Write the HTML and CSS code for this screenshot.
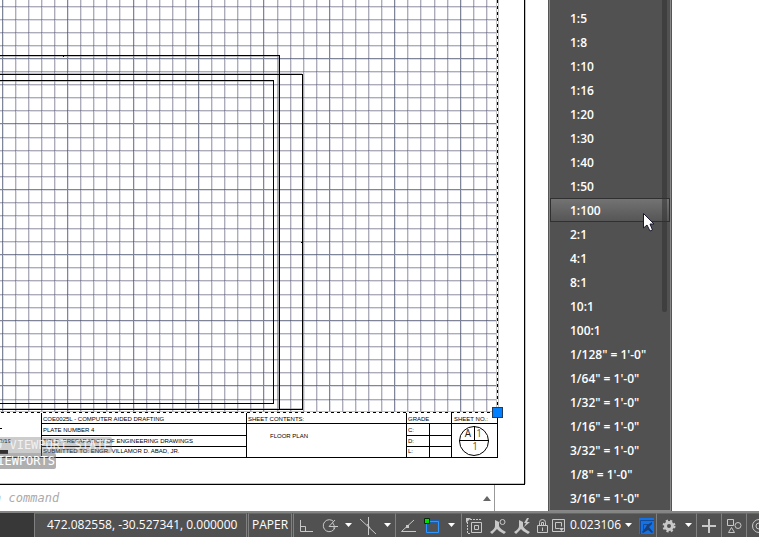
FILE: index.html
```html
<!DOCTYPE html>
<html lang="en">
<head>
<meta charset="utf-8">
<title>Floor plan layout</title>
<link rel="stylesheet" href="styles.css">
</head>
<body>
<main class="workspace">
  <svg class="sheet" width="548" height="486" viewBox="0 0 548 486" role="img" aria-label="Floor plan sheet">
    <g class="grid">
      <path class="soft" d="M3.5 0V412M16.5 0V412M29.5 0V412M42.5 0V412M55.5 0V412M68.5 0V412M81.5 0V412M94.5 0V412M107.5 0V412M120.5 0V412M134.5 0V412M147.5 0V412M160.5 0V412M173.5 0V412M186.5 0V412M199.5 0V412M212.5 0V412M225.5 0V412M238.5 0V412M251.5 0V412M264.5 0V412M278.5 0V412M291.5 0V412M304.5 0V412M317.5 0V412M330.5 0V412M343.5 0V412M356.5 0V412M369.5 0V412M382.5 0V412M395.5 0V412M408.5 0V412M421.5 0V412M435.5 0V412M448.5 0V412M461.5 0V412M474.5 0V412M487.5 0V412"/>
      <path class="soft" d="M0 7.5H496M0 20.5H496M0 33.5H496M0 46.5H496M0 59.5H496M0 72.5H496M0 85.5H496M0 98.5H496M0 111.5H496M0 124.5H496M0 138.5H496M0 151.5H496M0 164.5H496M0 177.5H496M0 190.5H496M0 203.5H496M0 216.5H496M0 229.5H496M0 242.5H496M0 255.5H496M0 268.5H496M0 281.5H496M0 295.5H496M0 308.5H496M0 321.5H496M0 334.5H496M0 347.5H496M0 360.5H496M0 373.5H496M0 386.5H496M0 400.5H496"/>
      <path class="minor" d="M15.5 0V412M28.5 0V412M41.5 0V412M54.5 0V412M80.5 0V412M93.5 0V412M106.5 0V412M119.5 0V412M146.5 0V412M159.5 0V412M172.5 0V412M185.5 0V412M211.5 0V412M224.5 0V412M237.5 0V412M250.5 0V412M277.5 0V412M290.5 0V412M303.5 0V412M316.5 0V412M342.5 0V412M355.5 0V412M368.5 0V412M381.5 0V412M407.5 0V412M420.5 0V412M434.5 0V412M447.5 0V412M473.5 0V412M486.5 0V412"/>
      <path class="minor" d="M0 6.5H496M0 19.5H496M0 32.5H496M0 45.5H496M0 71.5H496M0 84.5H496M0 97.5H496M0 110.5H496M0 137.5H496M0 150.5H496M0 163.5H496M0 176.5H496M0 202.5H496M0 215.5H496M0 228.5H496M0 241.5H496M0 267.5H496M0 280.5H496M0 294.5H496M0 307.5H496M0 333.5H496M0 346.5H496M0 359.5H496M0 372.5H496M0 399.5H496"/>
      <path class="major" d="M2.5 0V412M67.5 0V412M133.5 0V412M198.5 0V412M263.5 0V412M329.5 0V412M394.5 0V412M460.5 0V412M0 58.5H496M0 123.5H496M0 189.5H496M0 254.5H496M0 320.5H496M0 385.5H496"/>
    </g>
    <path class="wall-shade" d="M0 56.5H278M278.5 56V409M0 73.5H302M0 81.5H273M0 408.5H302"/>
    <path class="ink" d="M0 55.5H279.5V409M0 74.5H302.5V409.5H0M0 80.5H273.5V403.5H0M63 56.5H64M301 242.5H302"/>
    <path class="edge-shade" d="M496.5 0V411M498.5 0V411M0 411.5H497M525.5 0V484M0 483.5H524"/>
    <path class="ink" d="M524.5 0V484.5H0"/>
    <path class="dash-base" d="M497.5 0V412.5H0"/>
    <path class="dash" d="M497.5 0V412.5H0"/>
    <!-- title block -->
    <path class="ink" d="M41.5 413V457M246.5 413V457M406.5 413V457M429.5 423V457M451.5 413V457M497.5 413V457.5H0M41 423.5H497M41 435.5H246M406 435.5H451M41 446.5H246M406 446.5H451M0 428.5H2"/>
    <path class="bar" d="M0 450H8V454H0Z"/>
    <g class="label">
      <text x="43" y="421">COE0025L - COMPUTER AIDED DRAFTING</text>
      <text x="43" y="432">PLATE NUMBER 4</text>
      <text x="43" y="443">TITLE: PREPARATION OF ENGINEERING DRAWINGS</text>
      <text x="43" y="453">SUBMITTED TO: ENGR. VILLAMOR D. ABAD, JR.</text>
      <text x="248" y="421">SHEET CONTENTS:</text>
      <text x="270" y="438">FLOOR PLAN</text>
      <text x="408" y="421">GRADE</text>
      <text x="454" y="421">SHEET NO.:</text>
      <text x="408" y="432">C:</text>
      <text x="408" y="443">D:</text>
      <text x="408" y="453">L:</text>
      <text x="11" y="443" text-anchor="end">02/19</text>
    </g>
    <circle class="ring" cx="474" cy="441" r="14.5"/>
    <path class="ink" d="M459 440.5H489M474.5 426V440"/>
    <g class="mark">
      <text x="468" y="437">A</text>
      <text class="warm" x="479" y="437">1</text>
      <text class="warm" x="475" y="450">1</text>
    </g>
    <rect class="grip" x="492.5" y="407.5" width="10" height="10"/>
  </svg>
  <div class="history">
    <p>D VIEWPORT STATE</p>
    <p class="second">VIEWPORTS</p>
  </div>
</main>

<form class="command">
  <input type="text" aria-label="Command" placeholder="Type a command">
  <button type="button" aria-label="Recent commands"><svg width="8" height="5"><path d="M0 5L4 0L8 5Z"/></svg></button>
</form>

<footer class="status">
  <div class="blank"></div>
  <div class="group coords">472.082558, -30.527341, 0.000000</div>
  <button class="group paper" type="button">PAPER</button>
  <div class="group">
    <button class="tool" type="button" aria-label="Ortho mode"><svg width="16" height="16"><path d="M2.500 2V13.500H15M2.500 8.500H7.500V13"/></svg></button>
    <button class="tool" type="button" aria-label="Polar tracking"><svg width="16" height="16"><path d="M12 4A6 6 0 1 0 13 9.500M7 8.500H16M7 8.500L13 2M10.500 4.500Q13 7 12 11"/></svg></button>
    <button class="caret" type="button" aria-label="Polar options"><svg width="7" height="5"><path d="M0 0H7L3.500 4Z"/></svg></button>
    <button class="tool" type="button" aria-label="Isometric drafting"><svg width="18" height="18"><path d="M1 2L17 17M9.500 0V18M8 7L11 11"/></svg></button>
    <button class="caret" type="button" aria-label="Isometric options"><svg width="7" height="5"><path d="M0 0H7L3.500 4Z"/></svg></button>
  </div>
  <div class="group snaps">
    <button class="tool" type="button" aria-label="Snap tracking"><svg width="16" height="16"><path d="M14 2L1.500 13.500H16"/><path class="fill" d="M6 7H9V10H6Z"/></svg></button>
    <button class="tool" type="button" aria-label="Object snap"><svg width="18" height="18"><path class="glow" d="M4 4.500H15.500V15.500H4Z"/><path class="blue" d="M3.500 4.500H15.500V15.500H3.500Z"/><path class="green" d="M1.500 1.500H6.500V6.500H1.500Z"/></svg></button>
    <button class="caret" type="button" aria-label="Snap options"><svg width="7" height="5"><path d="M0 0H7L3.500 4Z"/></svg></button>
  </div>
  <div class="group scales">
    <button class="tool" type="button" aria-label="Selection cycling"><svg width="16" height="16"><path d="M5.500 4.500H15.500V14.500H5.500ZM8.500 7.500H12.500V11.500H8.500Z"/><path class="dots" d="M4 1.500H16M1.500 4V15.500H5"/><path class="fill" d="M0 0H5L0 5Z"/></svg></button>
    <button class="tool" type="button" aria-label="Annotation visibility"><svg width="16" height="16"><path class="fill" d="M5 2L9 4V8Q10 11 16 14L14 16L9 13L7 11L2 16L0 14Q5 11 5 8Z"/><circle cx="12.500" cy="4" r="2.500"/></svg></button>
    <button class="tool" type="button" aria-label="Auto scale"><svg width="16" height="16"><path class="fill" d="M5 2L9 4V8Q10 11 16 14L14 16L9 13L7 11L2 16L0 14Q5 11 5 8ZM13 0L10 5H12L10 9L16 4H13L15 0Z"/></svg></button>
    <button class="tool narrow" type="button" aria-label="Lock viewport"><svg width="13" height="16"><path d="M1.500 7.500H11.500V14.500H1.500ZM3.500 7V4.500Q3.500 1.500 6.500 1.500T9.500 4.500V7M5.500 7V4.500H7.500V7M6.500 9.500V13"/></svg></button>
    <button class="tool narrow" type="button" aria-label="Maximize viewport"><svg width="15" height="15"><path d="M1.500 1.500H13.500V13.500H1.500ZM8.500 10.500H4.500V4.500H10.500V8.500"/><path class="fill" d="M8 10H13L10.500 13Z"/></svg></button>
    <button class="scale" type="button"><span>0.023106</span><svg width="7" height="5"><path d="M0 0H7L3.500 4Z"/></svg></button>
    <button class="tool sync" type="button" aria-label="Synchronize scale"><svg width="15" height="16"><rect class="sync-bg" width="15" height="16"/><path class="sync-line" d="M1.500 16V2.500H15M4.500 12V6.500H9"/><path class="sync-star" d="M13 4V6L10 9L14 14L13 15L9 12L4 15L3 14L7 9L8 7Z"/></svg></button>
  </div>
  <div class="group">
    <button class="tool" type="button" aria-label="Workspace"><svg width="14" height="14" viewBox="0 0 14 14"><circle class="cog" cx="7" cy="7" r="5"/><circle class="fill" cx="7" cy="7" r="5"/><circle class="hole" cx="7" cy="7" r="2"/></svg></button>
    <button class="caret" type="button" aria-label="Workspace options"><svg width="7" height="5"><path d="M0 0H7L3.500 4Z"/></svg></button>
  </div>
  <div class="group">
    <button class="tool" type="button" aria-label="Annotation monitor"><svg width="14" height="14"><path class="plus" d="M0 7H14M7 0V14"/></svg></button>
  </div>
  <div class="group">
    <button class="tool" type="button" aria-label="Isolate objects"><svg width="16" height="16"><path d="M1.500 1.500H7.500V7.500H1.500ZM2.500 14.500L5.500 9.500L8.500 14.500Z"/><circle cx="12" cy="7.500" r="3"/></svg></button>
  </div>
  <div class="group">
    <button class="tool" type="button" aria-label="Hardware acceleration"><svg width="16" height="16"><circle cx="8" cy="8" r="6.500"/><circle cx="8" cy="8" r="3"/></svg></button>
  </div>
</footer>

<div class="menu" role="listbox" aria-label="Viewport scale">
  <button type="button" role="option">1:5</button>
  <button type="button" role="option">1:8</button>
  <button type="button" role="option">1:10</button>
  <button type="button" role="option">1:16</button>
  <button type="button" role="option">1:20</button>
  <button type="button" role="option">1:30</button>
  <button type="button" role="option">1:40</button>
  <button type="button" role="option">1:50</button>
  <button type="button" role="option" class="active" aria-selected="true">1:100</button>
  <button type="button" role="option">2:1</button>
  <button type="button" role="option">4:1</button>
  <button type="button" role="option">8:1</button>
  <button type="button" role="option">10:1</button>
  <button type="button" role="option">100:1</button>
  <button type="button" role="option">1/128" = 1'-0"</button>
  <button type="button" role="option">1/64" = 1'-0"</button>
  <button type="button" role="option">1/32" = 1'-0"</button>
  <button type="button" role="option">1/16" = 1'-0"</button>
  <button type="button" role="option">3/32" = 1'-0"</button>
  <button type="button" role="option">1/8" = 1'-0"</button>
  <button type="button" role="option">3/16" = 1'-0"</button>
  <span class="thumb"></span>
  <svg class="pointer" width="14" height="21"><path d="M1.500 1.500V16L5 13L8 19L10.500 18L8 12H12Z"/></svg>
</div>
</body>
</html>
```
FILE: styles.css
```css
* { box-sizing: border-box; }
body {
  margin: 0;
  height: 100vh;
  display: flex;
  flex-direction: column;
  position: relative;
  overflow: hidden;
  background: #fff;
  font: 12px/16px "Open Sans", "Noto Sans", sans-serif;
}
button {
  margin: 0;
  padding: 0;
  border: 0;
  background: none;
  color: inherit;
  font: inherit;
}

/* drawing area */
.workspace { flex: 1; position: relative; min-height: 0; overflow: hidden; }
.sheet { display: block; }
.sheet path, .sheet rect { shape-rendering: crispEdges; fill: none; }
.soft { stroke: #dedee6; }
.minor { stroke: #484866; stroke-opacity: .45; }
.major { stroke: #3c4362; stroke-opacity: .65; }
.wall-shade { stroke: #888; stroke-opacity: .5; }
.edge-shade { stroke: #aaa; stroke-opacity: .7; }
.ink { stroke: #000; }
.dash-base { stroke: #fff; }
.dash { stroke: #000; stroke-dasharray: 3 3; }
.sheet .bar { fill: #111; }
.label { font: 6px "Liberation Sans", sans-serif; fill: #000; }
.ring { fill: none; stroke: #000; }
.mark { font: 10px "Open Sans", sans-serif; text-anchor: middle; fill: #222; }
.warm { fill: #8a5018; }
.sheet .grip { fill: #007fff; stroke: #223a5c; }

.history {
  position: absolute;
  left: 0;
  bottom: 16px;
  display: flex;
  flex-direction: column;
  align-items: flex-start;
  font: 12px/16px "DejaVu Sans Mono", monospace;
  color: rgba(255, 255, 255, .75);
}
.history p {
  margin: 0 0 0 -5px;
  padding-right: 1px;
  background: rgba(110, 110, 110, .35);
  border-radius: 0 2px 2px 0;
}
.history .second { margin-left: -10px; background: rgba(110, 110, 110, .55); color: #fff; }

/* command line */
.command {
  width: 495px;
  height: 26px;
  display: flex;
  align-items: center;
  overflow: hidden;
  border-right: 1px solid #999;
  background: #fff;
}
.command input {
  flex: 1;
  margin-left: -42px;
  padding: 0;
  border: 0;
  outline: 0;
  background: none;
  font: italic 12px/16px "DejaVu Sans Mono", monospace;
}
.command input::placeholder { color: #aaa; opacity: 1; }
.command button { width: 14px; display: flex; justify-content: center; }
.command path { fill: #666; }

/* status bar */
.status {
  height: 26px;
  flex: none;
  display: flex;
  overflow: hidden;
  border-top: 2px solid #848684;
  background: #515151;
  color: #fff;
}
.blank { width: 34px; flex: none; background: #383838; }
.group {
  flex: none;
  display: flex;
  align-items: center;
  border-left: 1px solid #808080;
  border-top: 1px solid #666;
}
.coords, .paper, .scale span { padding-bottom: 2px; }
.coords { width: 213px; padding-left: 12px; border-right: 1px solid #808080; }
.paper { width: 44px; padding-left: 3px; margin-left: 1px; border-right: 1px solid #808080; }
.paper + .group { margin-left: 1px; width: 102px; }
.snaps { width: 66px; }
.scales { width: 195px; }
.tool { width: 24px; height: 24px; display: flex; align-items: center; justify-content: center; }
.caret { width: 15px; height: 24px; display: flex; align-items: center; justify-content: center; }
.narrow { width: 16px; }
.sync { width: 20px; }
.scale { flex: 1; display: flex; align-items: center; justify-content: center; gap: 4px; }
.status svg { flex: none; fill: none; stroke: #c8c8c8; }
.status .caret svg, .status .scale svg { fill: #fff; stroke: none; }
.status .fill { fill: #c8c8c8; stroke: none; }
.dots { stroke-dasharray: 2 1; }
.glow { stroke: #1c5fb0; stroke-width: 3; }
.blue { stroke: #2d95ff; }
.green { fill: #00e000; stroke: #062806; }
.sync-bg { fill: #1373e6; stroke: none; }
.sync-line { stroke: #174a94; }
.sync-star { fill: #1b3f78; stroke: none; }
.cog { stroke: #c8c8c8; stroke-width: 3; stroke-dasharray: 2 2; }
.hole { fill: #515151; stroke: none; }
.plus { stroke: #c8c8c8; stroke-width: 2; }

/* scale list */
.menu {
  position: absolute;
  left: 548px;
  bottom: 26px;
  width: 124px;
  padding: 0 0 1px;
  display: flex;
  flex-direction: column;
  border: 1px solid #555;
  border-top: 0;
  border-bottom: 0;
  background: #515151;
  box-shadow: inset 1px 0 #888, inset -1px 0 #888, inset 0 -1px #888;
  color: #fff;
  font-weight: 600;
}
.menu::before { content: ""; height: 6px; }
.menu button { height: 24px; margin: 0 1px; padding: 2px 0 0 19px; border: 1px solid transparent; text-align: left; }
.menu .active { border-color: #303030; background: linear-gradient(#737373, #565656); }
.thumb {
  position: absolute;
  top: 0;
  right: 4px;
  width: 5px;
  height: 312px;
  border-radius: 0 0 2px 2px;
  background: rgba(50, 50, 50, .55);
}
.pointer { position: absolute; left: 93px; top: 212px; }
.pointer path { fill: #fff; stroke: #191930; }
```
